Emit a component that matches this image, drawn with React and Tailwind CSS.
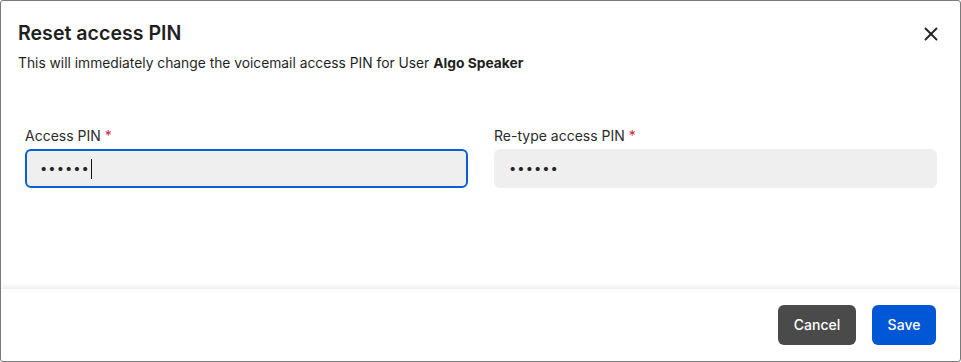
import React from 'react';
import { X } from 'lucide-react';

const Field = ({ label, focused }) => (
  <div className="flex-1 flex flex-col">
    <label className="text-[14px] leading-[20px] text-[#2b2b2b] mb-[3px]">
      {label} <span className="text-[#d7263d]">*</span>
    </label>
    <div
      className={`h-[39px] rounded-[6px] bg-[#efefef] flex items-center px-[13px] ${
        focused ? 'border-2 border-[#0a5fd6]' : 'border-2 border-transparent'
      }`}
    >
      <span className="text-[13px] tracking-[1px] text-[#222]">••••••</span>
      {focused && <span className="w-px h-[20px] bg-[#111] ml-[1px]"></span>}
    </div>
  </div>
);

export default function App() {
  return (
    <div
      className="w-[961px] h-[362px] bg-white border border-[#7a7a7a] rounded-[3px] flex flex-col overflow-hidden"
      style={{ fontFamily: 'Inter, "Noto Sans", sans-serif' }}
    >
      <div className="flex-1 flex flex-col">
        <div className="flex items-start justify-between pl-[17px] pr-[18px] pt-[19px]">
          <div>
            <h2 className="text-[19.6px] leading-[26px] font-semibold text-[#1f1f1f]">Reset access PIN</h2>
            <p className="text-[13.8px] leading-[20px] text-[#1f1f1f] mt-[7px]">
              This will immediately change the voicemail access PIN for User <span className="font-bold">Algo Speaker</span>
            </p>
          </div>
          <button className="mt-[3px] text-[#222]">
            <X className="w-[22px] h-[22px]" strokeWidth={2} />
          </button>
        </div>
        <div className="flex gap-[26px] pl-[24px] pr-[23px] mt-[53px]">
          <Field label="Access PIN" focused />
          <Field label="Re-type access PIN" />
        </div>
      </div>
      <div className="h-[73px] flex items-center justify-end gap-[16px] pr-[24px] pb-[1px] shadow-[0_-2px_4px_rgba(0,0,0,0.06)] border-t border-[#f0f0f0]">
        <button className="h-[40px] w-[78px] rounded-[6px] bg-[#4a4a4a] text-white text-[14px] font-medium">
          Cancel
        </button>
        <button className="h-[40px] w-[64px] rounded-[6px] bg-[#0057d6] text-white text-[14px] font-medium">
          Save
        </button>
      </div>
    </div>
  );
}
